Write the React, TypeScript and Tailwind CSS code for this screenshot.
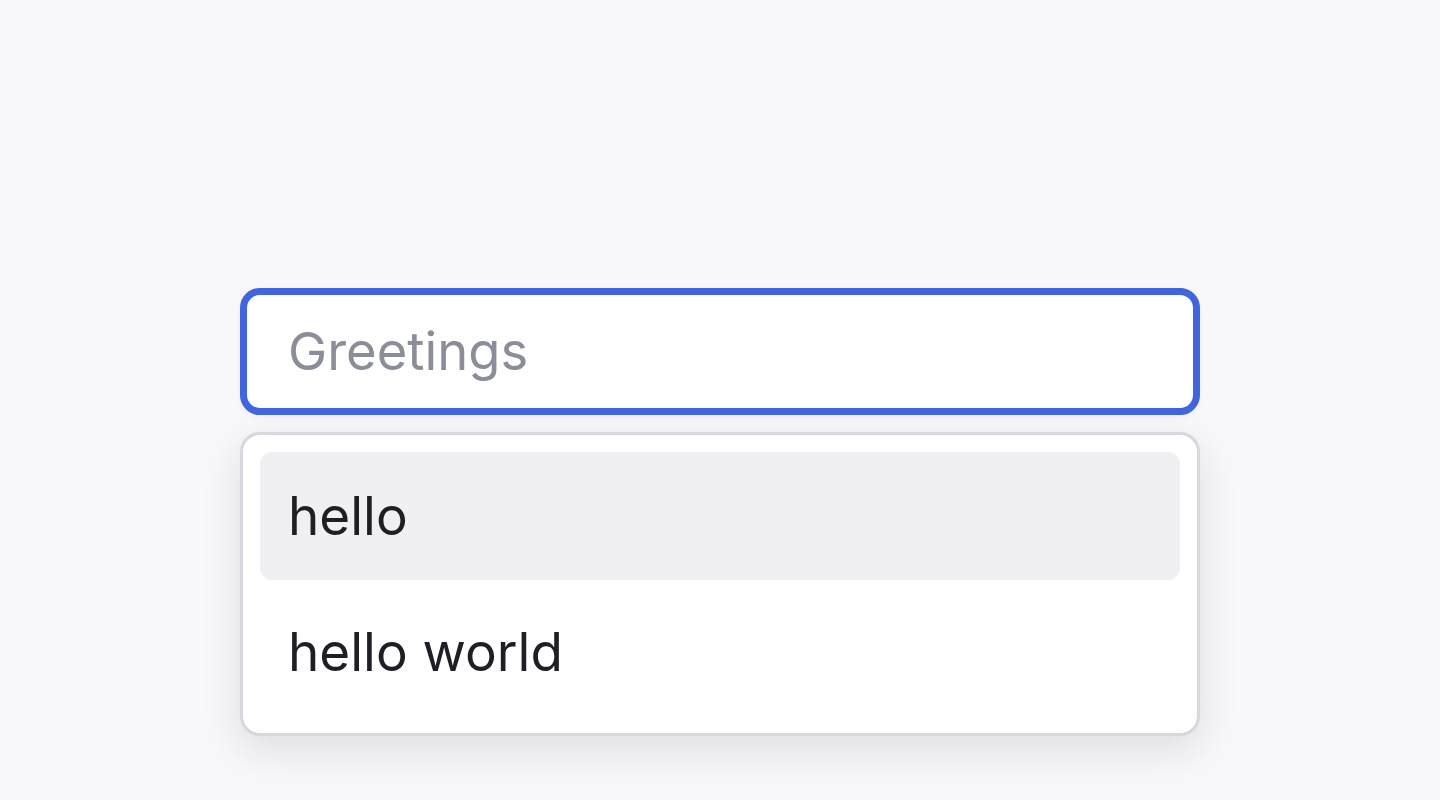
import React from "react";

export default function App() {
  return (
    <div
      className="w-full h-[800px] bg-[#f8f8fa] pt-[288px]"
      style={{ fontFamily: "Inter, 'Noto Sans', sans-serif" }}
    >
      <div className="w-[960px] mx-auto flex flex-col gap-[17px]">
        <div className="h-[127px] rounded-[20px] border-[7px] border-[#4264dc] bg-white flex items-center pl-[41px] shadow-[0_2px_6px_rgba(0,0,0,0.04)]">
          <span className="text-[52.5px] leading-none text-[#8b8d98]">Greetings</span>
        </div>
        <div className="rounded-[20px] border-[3px] border-[#d7d7df] bg-white px-[17px] pt-[17px] pb-[17px] flex flex-col gap-[8px] shadow-[0_14px_40px_rgba(30,30,60,0.12)]">
          <div className="h-[128px] rounded-[12px] bg-[#f0f0f2] flex items-center pl-[28px]">
            <span className="text-[53px] leading-none text-[#1e1f24]">hello</span>
          </div>
          <div className="h-[128px] rounded-[12px] flex items-center pl-[28px]">
            <span className="text-[53px] leading-none text-[#1e1f24]">hello world</span>
          </div>
        </div>
      </div>
    </div>
  );
}
